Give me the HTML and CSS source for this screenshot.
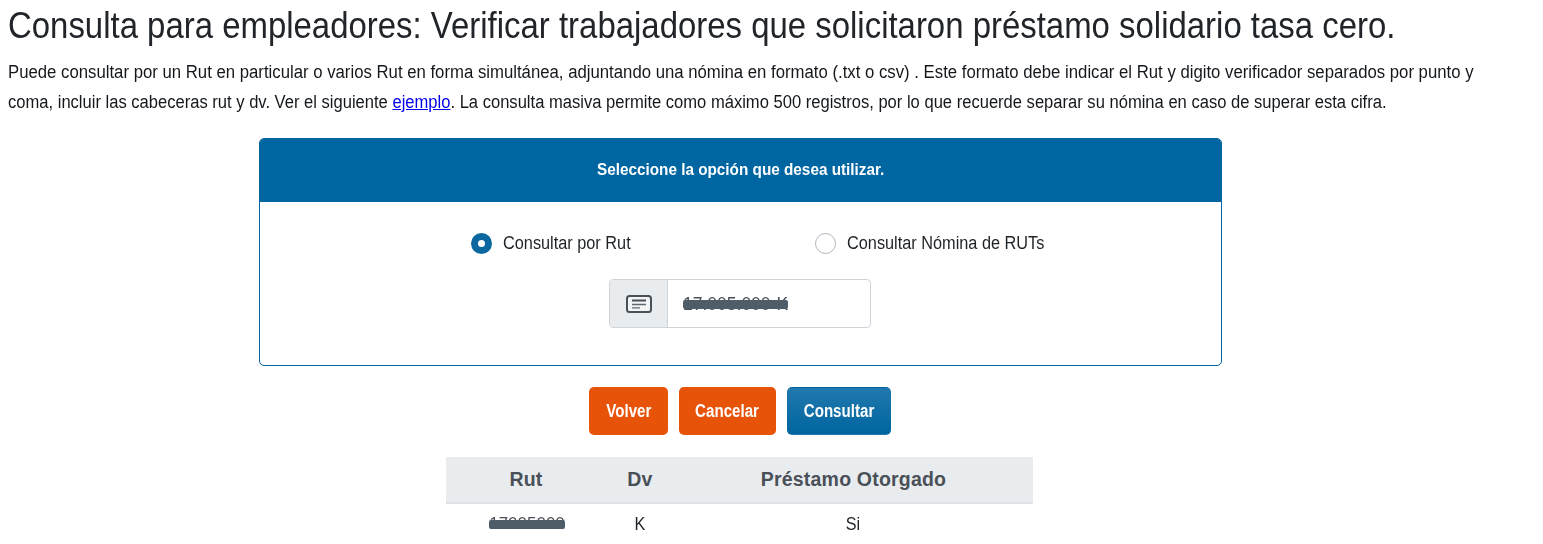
FILE: index.html
```html
<!DOCTYPE html>
<html lang="es">
<head>
<meta charset="utf-8">
<title>Consulta para empleadores</title>
<link rel="stylesheet" href="styles.css">
</head>
<body>
<main class="page">
  <h1 class="title">Consulta para empleadores: Verificar trabajadores que solicitaron préstamo solidario tasa cero.</h1>
  <p class="intro"><span class="line line-a">Puede consultar por un Rut en particular o varios Rut en forma simultánea, adjuntando una nómina en formato (.txt o csv) . Este formato debe indicar el Rut y digito verificador separados por punto y</span><span class="line line-b">coma, incluir las cabeceras rut y dv. Ver el siguiente <a href="#">ejemplo</a>. La consulta masiva permite como máximo 500 registros, por lo que recuerde separar su nómina en caso de superar esta cifra.</span></p>
  <section class="card">
    <header class="card-head"><span class="narrow">Seleccione la opción que desea utilizar.</span></header>
    <div class="card-body">
      <div class="options">
        <label class="option"><span class="radio radio-on"></span><span class="label">Consultar por Rut</span></label>
        <label class="option"><span class="radio"></span><span class="label">Consultar Nómina de RUTs</span></label>
      </div>
      <div class="input-group">
        <span class="addon">
          <svg width="26" height="18" viewBox="0 0 26 18" fill="none"><rect x="1" y="1" width="24" height="16" rx="2.5" fill="#f3f4f6" stroke="#4a5158" stroke-width="2"/><path d="M6 5.5h14" stroke="#4a5158" stroke-width="2.2"/><path d="M6 9.5h14" stroke="#5f676e" stroke-width="1.4"/><path d="M6 12.8h8" stroke="#5f676e" stroke-width="1.3"/></svg>
        </span>
        <span class="field"><span class="masked masked-input">17.005.000-K<i class="scribble"></i></span></span>
      </div>
    </div>
  </section>
  <div class="actions">
    <button class="btn btn-orange btn-back"><span class="narrow">Volver</span></button>
    <button class="btn btn-orange btn-cancel"><span class="narrow">Cancelar</span></button>
    <button class="btn btn-blue"><span class="narrow">Consultar</span></button>
  </div>
  <table class="results">
    <thead><tr><th class="c1">Rut</th><th class="c2">Dv</th><th class="c3">Préstamo Otorgado</th></tr></thead>
    <tbody><tr><td><span class="masked masked-cell">17005000<i class="scribble"></i></span></td><td><span class="narrow">K</span></td><td><span class="narrow">Si</span></td></tr></tbody>
  </table>
</main>
</body>
</html>
```
FILE: styles.css
```css
* { box-sizing: border-box; }
html, body { margin: 0; background: #fff; }
body { height: 544px; overflow: hidden; font-family: "Liberation Sans", Arial, sans-serif; color: #212529; }
.page { display: flex; flex-direction: column; align-items: flex-start; filter: blur(.35px); }
.title { margin: 5px 0 0 8px; font-size: 37px; line-height: 42px; font-weight: 400; white-space: nowrap; transform: scaleX(.89); transform-origin: left center; }
.intro { margin: 10px 0 0 8px; font-size: 18px; line-height: 30px; white-space: nowrap; color: #14181c; }
.line { display: block; width: max-content; transform-origin: left center; }
.line-a { transform: scaleX(.93); }
.line-b { transform: scaleX(.92); }
.intro a { color: #0000ee; }
.narrow { display: inline-block; transform: scaleX(.9); }
.card { margin: 21px 0 0 259px; width: 963px; height: 228px; border: 1px solid #00659f; border-radius: 5px; overflow: hidden; }
.card-head { height: 63px; padding-bottom: 2px; background: #0066a1; color: #fff; font-size: 17px; font-weight: 700; display: flex; align-items: center; justify-content: center; white-space: nowrap; }
.card-body { display: flex; flex-direction: column; align-items: center; }
.options { align-self: flex-start; display: grid; grid-template-columns: 344px 240px; margin: 29px 0 0 211px; }
.option { display: flex; align-items: center; gap: 11px; font-size: 18px; line-height: 24px; color: #1e2327; white-space: nowrap; }
.label { display: inline-block; transform: scaleX(.905); transform-origin: left center; }
.radio { width: 21px; height: 21px; border-radius: 50%; border: 1px solid #adb5bd; background: #fff; flex: none; }
.radio-on { border: 7px solid #0a679f; }
.input-group { align-self: flex-start; display: flex; width: 262px; height: 49px; margin: 24px 0 0 349px; border: 1px solid #ced4da; border-radius: 4px; overflow: hidden; }
.addon { width: 58px; background: #e9ecef; border-right: 1px solid #ced4da; display: flex; align-items: center; justify-content: center; }
.field { flex: 1; display: flex; align-items: center; padding-left: 15px; padding-top: 2px; color: #495057; }
.masked { position: relative; display: inline-block; color: #495057; font-size: 17px; }
.masked-input { font-size: 17.5px; }
.masked-cell { left: 1px; top: -1px; }
.scribble { position: absolute; left: 0; right: 0; top: 6px; height: 9px; background: #4f5d69; border-radius: 2px; }
.actions { display: flex; gap: 11px; margin: 21px 0 0 589px; }
.btn { height: 48px; border: 1px solid transparent; border-radius: 5px; padding: 0; color: #fff; font: 700 18px "Liberation Sans", Arial, sans-serif; white-space: nowrap; }
.btn .narrow { transform: scaleX(.84); }
.btn-orange { background: #e8530a; }
.btn-back { width: 79px; }
.btn-cancel { width: 97px; }
.btn-blue { width: 104px; background: linear-gradient(#2179ae, #00659f); }
.results { margin: 22px 0 0 446px; width: 587px; border-collapse: collapse; table-layout: fixed; text-align: center; }
.results th { height: 46px; padding: 0; background: #e9ecef; border-bottom: 2px solid #dee2e6; color: #495057; font-size: 19.5px; font-weight: 700; letter-spacing: 0.2px; }
.results td { height: 42px; padding: 0; font-size: 18px; color: #1e2327; }
.c1 { width: 160px; }
.c2 { width: 68px; }
```
